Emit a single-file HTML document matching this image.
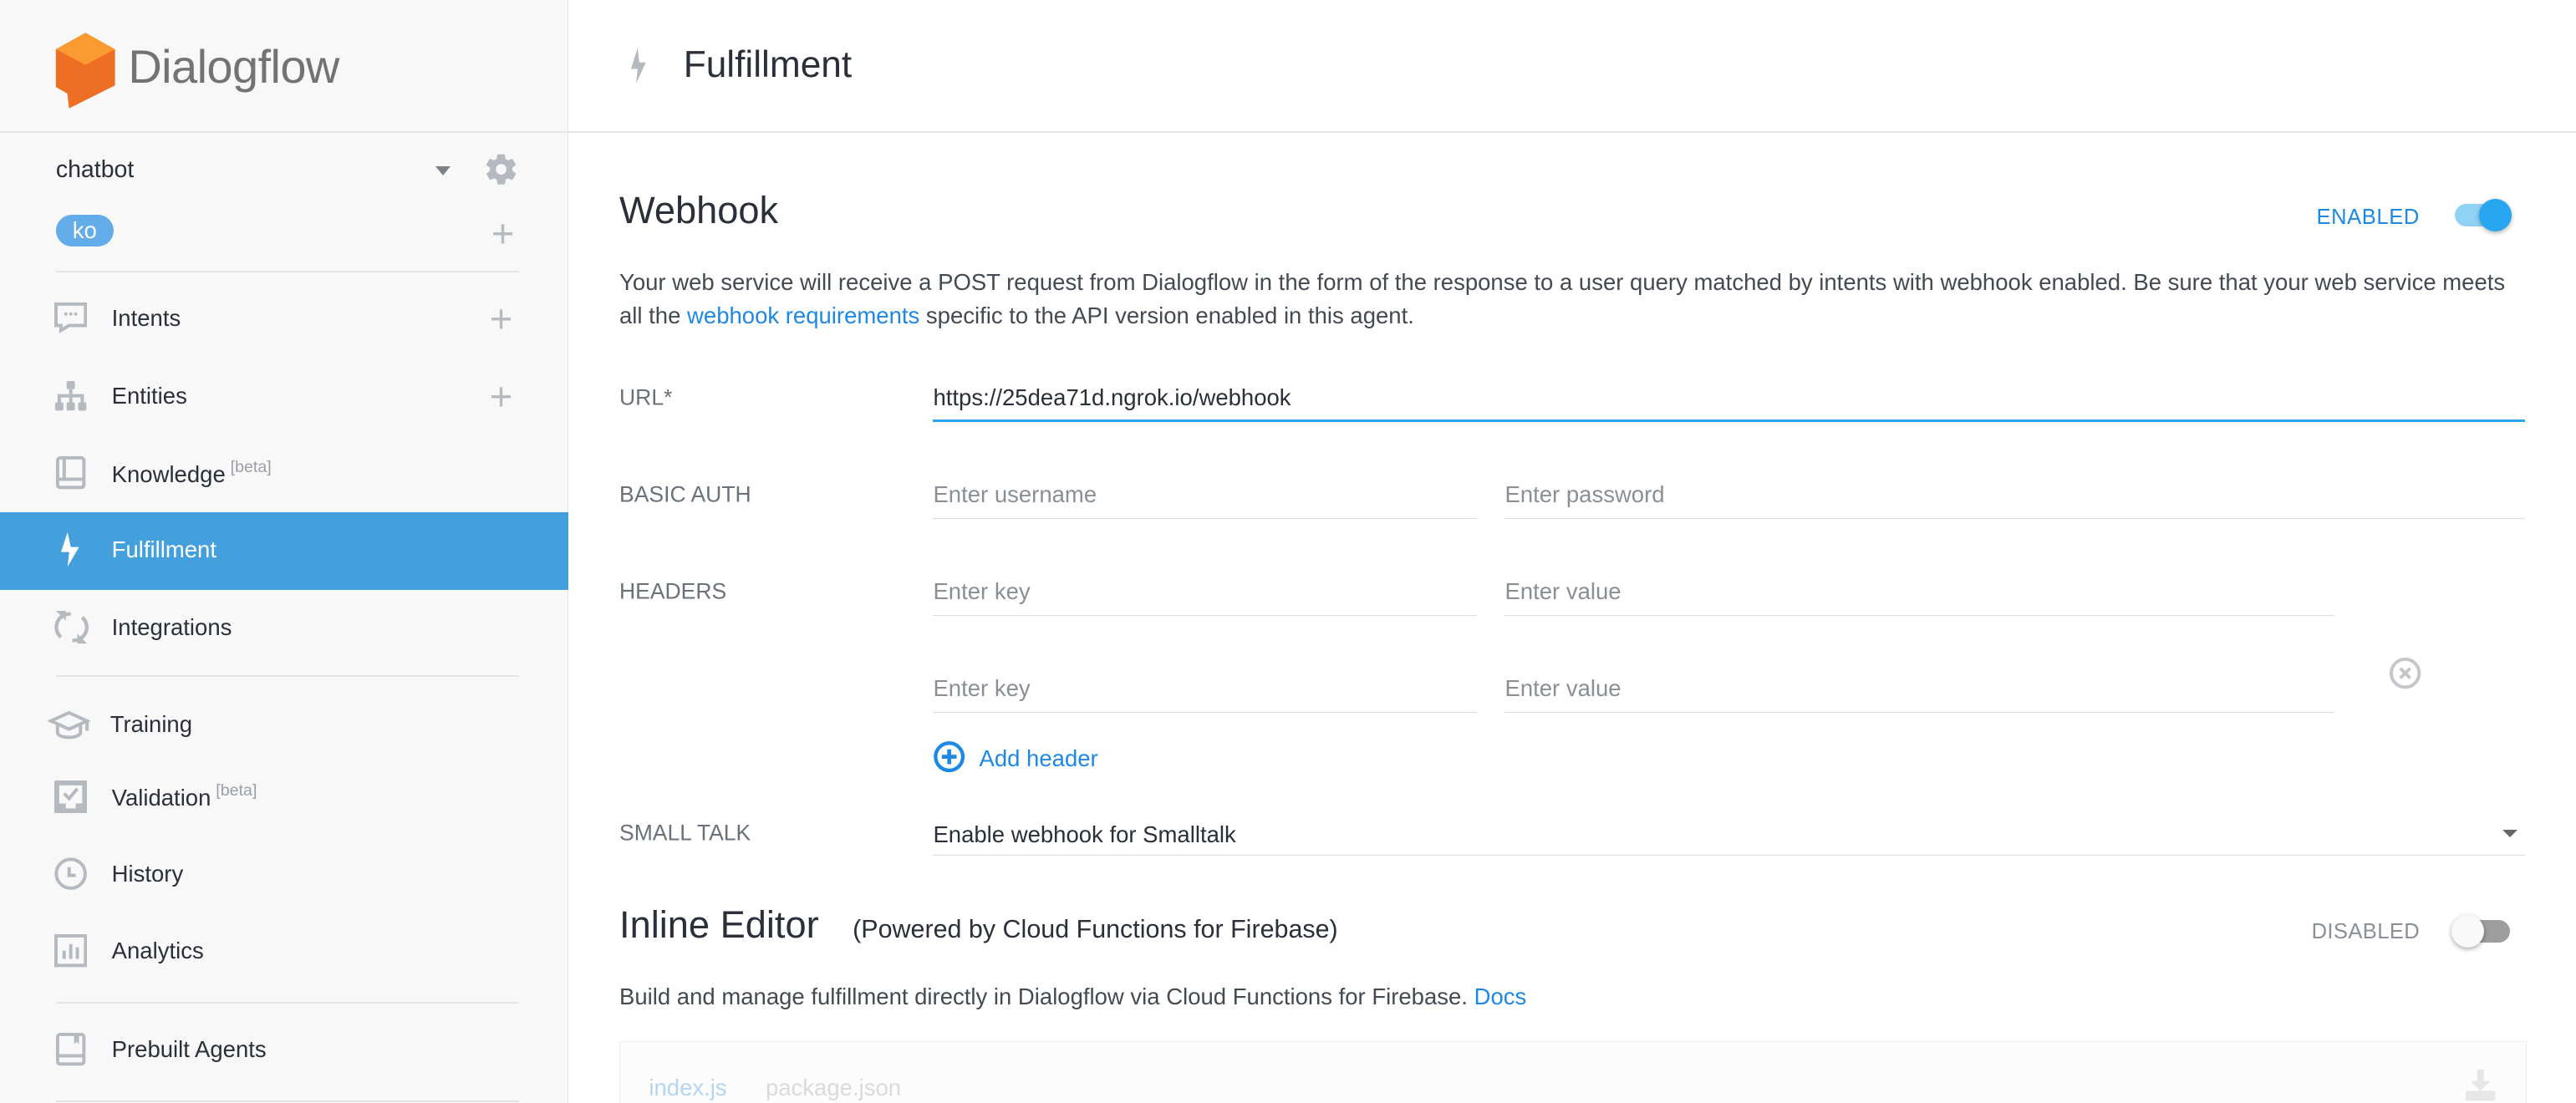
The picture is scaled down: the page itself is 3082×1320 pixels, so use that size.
<!DOCTYPE html>
<html><head><meta charset="utf-8">
<style>
*{margin:0;padding:0;box-sizing:border-box}
html,body{width:3082px;height:1320px;overflow:hidden;background:#fff}
#z{zoom:1.9656;width:1568px;height:672px;position:relative;font-family:"Liberation Sans",sans-serif;color:#202124}
.a{position:absolute;white-space:nowrap}
.side{position:absolute;left:0;top:0;width:346px;height:672px;background:#f8f8f8;border-right:1px solid #e6e6e6}
.hline{position:absolute;left:0;top:80px;width:1568px;height:1px;background:#e4e4e4}
.div{position:absolute;left:34px;width:282px;height:1px;background:#e3e3e3}
.it{position:absolute;left:68px;font-size:14px;color:#2a2f3a;transform:translateY(-50%)}
.it sup{font-size:10px;color:#9a9ea6;vertical-align:6px;margin-left:3px}
.ic{position:absolute;left:33px}
.plus{position:absolute;font-size:24px;color:#b5b9c0;transform:translate(-50%,-50%);font-weight:300}
.lbl{position:absolute;left:377px;font-size:13.5px;color:#6b717b;transform:translateY(-50%)}
.inp{position:absolute;border-bottom:1px solid #dcdcdc;height:18px;font-size:14px;color:#8a8f96}
.inp span{position:absolute;left:0;top:-5px}
.tx{font-size:14px;color:#444a52}
</style></head><body><div id="z">
<div class="side"></div>
<div class="hline"></div>
<svg class="a" style="left:0;top:0" width="80" height="80" viewBox="0 0 80 80">
<path d="M52,20 L70,30 L70,52 L42,66 L41,57 L34,53 L34,30 Z" fill="#ee6f24"/>
<path d="M52,20 L70,30 L52,39.5 L34,30 Z" fill="#fb9a30"/>
</svg>
<div class="a" style="left:78px;top:24px;font-size:28.5px;color:#737373;letter-spacing:-0.3px">Dialogflow</div>
<div class="a" style="left:34px;top:95px;font-size:14.5px;color:#2a2f3a">chatbot</div>
<div class="a" style="left:265px;top:101px;width:0;height:0;border-left:5px solid transparent;border-right:5px solid transparent;border-top:6px solid #7d828a"></div>
<svg class="a" style="left:294px;top:92px" width="22" height="22" viewBox="0 0 24 24"><path fill="#b5b9c0" d="M19.4 13c.04-.3.06-.6.06-1s-.02-.7-.06-1l2.1-1.6c.2-.15.24-.42.12-.64l-2-3.460c-.12-.22-.4-.3-.6-.22l-2.5 1c-.52-.4-1.080-.72-1.7-.98L14.4 2.4A.5.5 0 0 0 13.9 2h-4c-.25 0-.46.18-.5.42l-.38 2.650c-.6.25-1.170.58-1.7.98l-2.48-1c-.23-.08-.5 0-.6.22l-2 3.460c-.14.22-.08.5.12.64L4.57 11c-.04.3-.07.64-.07 1s.03.7.07 1l-2.1 1.650c-.2.15-.25.42-.13.64l2 3.460c.12.22.4.3.6.22l2.5-1c.52.4 1.080.72 1.7.98l.38 2.650c.04.24.25.42.5.42h4c.25 0 .46-.18.5-.42l.37-2.650c.6-.25 1.180-.58 1.7-.98l2.48 1c.23.08.5 0 .6-.22l2-3.460c.12-.22.07-.5-.12-.64zM12 15.5A3.5 3.5 0 1 1 12 8.5a3.5 3.5 0 0 1 0 7z"/></svg>
<div class="a" style="left:34px;top:131px;width:35px;height:19px;border-radius:10px;background:#62acea;color:#fff;font-size:14px;text-align:center;line-height:19px">ko</div>
<div class="plus" style="left:306px;top:142px">+</div>
<div class="div" style="top:165px"></div>
<svg class="ic" style="top:184px" width="20" height="20" viewBox="0 0 20 20"><path d="M1,1 H19 V14 H9 L4,17 V14 H1 Z" fill="none" stroke="#b5b9c0" stroke-width="2"/><circle cx="7" cy="7" r="1" fill="#b5b9c0"/><circle cx="10" cy="7" r="1" fill="#b5b9c0"/><circle cx="13" cy="7" r="1" fill="#b5b9c0"/></svg>
<div class="it" style="top:194px">Intents</div><div class="plus" style="left:305px;top:194px">+</div>
<svg class="ic" style="top:231px" width="20" height="20" viewBox="0 0 20 20" fill="#b5b9c0"><rect x="7.5" y="1" width="5" height="5" rx="1"/><rect x="9" y="6" width="2" height="5"/><rect x="2" y="9" width="16" height="2"/><rect x="2" y="9" width="2" height="5"/><rect x="16" y="9" width="2" height="5"/><rect x="9" y="9" width="2" height="5"/><rect x="0.5" y="14" width="5" height="5" rx="1"/><rect x="7.5" y="14" width="5" height="5" rx="1"/><rect x="14.5" y="14" width="5" height="5" rx="1"/></svg>
<div class="it" style="top:241px">Entities</div><div class="plus" style="left:305px;top:241px">+</div>
<svg class="ic" style="top:278px" width="20" height="20" viewBox="0 0 20 20"><rect x="2" y="1" width="16" height="18" rx="1.5" fill="none" stroke="#b5b9c0" stroke-width="2"/><rect x="5" y="1" width="2" height="13" fill="#b5b9c0"/><rect x="2" y="13" width="16" height="2" fill="#b5b9c0"/></svg>
<div class="it" style="top:288px">Knowledge<sup>[beta]</sup></div>
<div class="a" style="left:0;top:312px;width:346px;height:47px;background:#43a0dd"></div>
<svg class="ic" style="top:324px;left:36px" width="14" height="22" viewBox="0 0 14 22"><path d="M5,0 L1,12 L6,12 L5,21 L12,9 L7,9 Z" fill="#fff"/></svg>
<div class="it" style="top:335px;color:#fff">Fulfillment</div>
<svg class="ic" style="top:371px" width="21" height="22" viewBox="0 0 21 22"><path d="M10,3 A8,8 0 0 0 4,17" fill="none" stroke="#b5b9c0" stroke-width="2.2"/><path d="M11,19 A8,8 0 0 0 17,5" fill="none" stroke="#b5b9c0" stroke-width="2.2"/><path d="M1,1 L7,1 L7,7Z" fill="#b5b9c0"/><path d="M20,21 L14,21 L14,15Z" fill="#b5b9c0"/></svg>
<div class="it" style="top:382px">Integrations</div>
<div class="div" style="top:411px"></div>
<svg class="ic" style="top:432px;left:29px" width="26" height="20" viewBox="0 0 26 20"><path d="M13,2 L24,7 L13,12 L2,7 Z" fill="none" stroke="#b5b9c0" stroke-width="2"/><path d="M6,9 V14 C6,18 20,18 20,14 V9" fill="none" stroke="#b5b9c0" stroke-width="2"/><path d="M24,7 V13" stroke="#b5b9c0" stroke-width="2"/></svg>
<div class="it" style="top:441px;left:67px">Training</div>
<svg class="ic" style="top:475px" width="20" height="20" viewBox="0 0 20 20"><rect x="0" y="0" width="20" height="20" rx="1" fill="#b5b9c0"/><rect x="3" y="3" width="14" height="11" fill="#f8f8f8"/><path d="M6,8 L9,11 L14,5" fill="none" stroke="#b5b9c0" stroke-width="2"/><rect x="7" y="14" width="6" height="3" fill="#f8f8f8"/></svg>
<div class="it" style="top:485px">Validation<sup>[beta]</sup></div>
<svg class="ic" style="top:522px" width="20" height="20" viewBox="0 0 20 20"><circle cx="10" cy="10" r="8.8" fill="none" stroke="#b5b9c0" stroke-width="2"/><path d="M9,6 V11 H13" fill="none" stroke="#b5b9c0" stroke-width="2"/></svg>
<div class="it" style="top:532px">History</div>
<svg class="ic" style="top:569px" width="20" height="20" viewBox="0 0 20 20"><rect x="1" y="1" width="18" height="18" fill="none" stroke="#b5b9c0" stroke-width="2"/><rect x="5" y="10" width="2" height="5" fill="#b5b9c0"/><rect x="9" y="6" width="2" height="9" fill="#b5b9c0"/><rect x="13" y="8" width="2" height="7" fill="#b5b9c0"/></svg>
<div class="it" style="top:579px">Analytics</div>
<div class="div" style="top:610px"></div>
<svg class="ic" style="top:629px" width="20" height="20" viewBox="0 0 20 20"><rect x="2" y="1" width="16" height="18" rx="1.5" fill="none" stroke="#b5b9c0" stroke-width="2"/><rect x="2" y="13" width="16" height="2" fill="#b5b9c0"/><path d="M12,1 V7 L13.5,5.5 L15,7 V1Z" fill="#b5b9c0"/></svg>
<div class="it" style="top:639px">Prebuilt Agents</div>
<div class="div" style="top:670px"></div>

<svg class="a" style="left:384px;top:29px" width="10" height="23" viewBox="0 0 10 23"><path d="M4,0 L0,13 L4,13 L3,22 L9,9 L5,9 Z" fill="#b5b9c0"/></svg>
<div class="a" style="left:416px;top:27px;font-size:22.5px;color:#2a2f3a">Fulfillment</div>

<div class="a" style="left:377px;top:115px;font-size:23px;color:#2a2f3a">Webhook</div>
<div class="a" style="left:1410px;top:125px;font-size:13px;color:#1e88e5;letter-spacing:.3px">ENABLED</div>
<div class="a" style="left:1494px;top:124px;width:34px;height:14px;border-radius:7px;background:#90d2f6"></div>
<div class="a" style="left:1509px;top:121px;width:20px;height:20px;border-radius:50%;background:#29a6f1;box-shadow:0 1px 3px rgba(0,0,0,.3)"></div>
<div class="a tx" style="left:377px;top:164px">Your web service will receive a POST request from Dialogflow in the form of the response to a user query matched by intents with webhook enabled. Be sure that your web service meets</div>
<div class="a tx" style="left:377px;top:184px">all the <span style="color:#1e88e5">webhook requirements</span> specific to the API version enabled in this agent.</div>

<div class="lbl" style="top:242px">URL*</div>
<div class="inp" style="left:568px;top:238px;width:969px;border-bottom:2px solid #29a3ec;height:19px"><span style="color:#2a2f3a;top:-4px">https://25dea71d.ngrok.io/webhook</span></div>

<div class="lbl" style="top:301px">BASIC AUTH</div>
<div class="inp" style="left:568px;top:298px;width:331px"><span>Enter username</span></div>
<div class="inp" style="left:916px;top:298px;width:621px"><span>Enter password</span></div>

<div class="lbl" style="top:360px">HEADERS</div>
<div class="inp" style="left:568px;top:357px;width:331px"><span>Enter key</span></div>
<div class="inp" style="left:916px;top:357px;width:505px"><span>Enter value</span></div>
<div class="inp" style="left:568px;top:416px;width:331px"><span>Enter key</span></div>
<div class="inp" style="left:916px;top:416px;width:505px"><span>Enter value</span></div>
<svg class="a" style="left:1454px;top:400px" width="20" height="20" viewBox="0 0 20 20"><circle cx="10" cy="10" r="8.5" fill="none" stroke="#c4c6ca" stroke-width="2"/><path d="M7,7 L13,13 M13,7 L7,13" stroke="#c4c6ca" stroke-width="2"/></svg>

<svg class="a" style="left:568px;top:451px" width="20" height="20" viewBox="0 0 20 20"><circle cx="10" cy="10" r="8.3" fill="none" stroke="#1e88e5" stroke-width="2.2"/><path d="M10,5.5 V14.5 M5.5,10 H14.5" stroke="#1e88e5" stroke-width="2.4"/></svg>
<div class="a" style="left:596px;top:454px;font-size:14px;color:#1e88e5">Add header</div>

<div class="lbl" style="top:507px">SMALL TALK</div>
<div class="inp" style="left:568px;top:503px;width:969px"><span style="color:#2a2f3a;top:-3px">Enable webhook for Smalltalk</span></div>
<div class="a" style="left:1523px;top:505px;width:0;height:0;border-left:5px solid transparent;border-right:5px solid transparent;border-top:5px solid #666"></div>

<div class="a" style="left:377px;top:550px;font-size:23px;color:#2a2f3a">Inline Editor</div>
<div class="a" style="left:519px;top:557px;font-size:15.5px;color:#2a2f3a">(Powered by Cloud Functions for Firebase)</div>
<div class="a" style="left:1407px;top:560px;font-size:13px;color:#8a8f98;letter-spacing:.2px">DISABLED</div>
<div class="a" style="left:1494px;top:560px;width:34px;height:14px;border-radius:7px;background:#9e9e9e"></div>
<div class="a" style="left:1492px;top:557px;width:20px;height:20px;border-radius:50%;background:#f9f9f9;box-shadow:0 1px 3px rgba(0,0,0,.35)"></div>
<div class="a tx" style="left:377px;top:599px">Build and manage fulfillment directly in Dialogflow via Cloud Functions for Firebase. <span style="color:#1e88e5">Docs</span></div>

<div class="a" style="left:377px;top:634px;width:1161px;height:60px;background:#fcfcfc;border:1px solid #eeeeee"></div>
<div class="a" style="left:395px;top:654px;font-size:14px;color:#b5d5f0">index.js</div>
<div class="a" style="left:466px;top:654px;font-size:14px;color:#dadada">package.json</div>
<svg class="a" style="left:1500px;top:651px" width="20" height="20" viewBox="0 0 20 20" fill="#e6e6e6"><rect x="8" y="0" width="4" height="8"/><path d="M4,7 H16 L10,13Z"/><rect x="1" y="13" width="18" height="6" rx="1"/></svg>
</div></body></html>
